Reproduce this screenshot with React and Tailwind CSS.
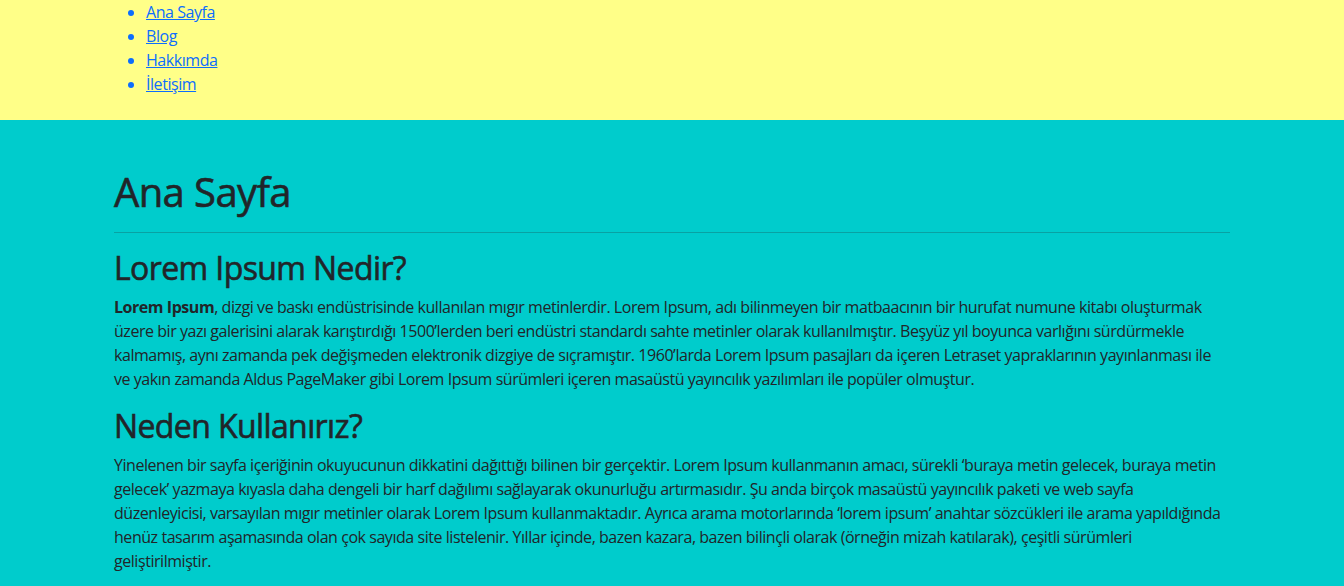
export default function App() {
  const links = ["Ana Sayfa", "Blog", "Hakkımda", "İletişim"];
  const heading = "font-medium tracking-[-0.6px] [-webkit-text-stroke:0.6px_#212529]";

  return (
    <div className="min-h-screen bg-[#00cccc] text-[#212529] text-[16px] leading-6 tracking-[-0.45px]" style={{ fontFamily: '"Open Sans", sans-serif' }}>
      <header className="bg-[#ffff88] h-[120px]">
        <div className="max-w-[1140px] mx-auto px-3">
          <ul className="list-disc pl-8">
            {links.map((l) => (
              <li key={l} className="text-[#0d6efd]">
                <a href="#" className="underline">{l}</a>
              </li>
            ))}
          </ul>
        </div>
      </header>

      <main className="max-w-[1140px] mx-auto px-3 pt-12 pb-4">
        <h1 className={`text-[40px] leading-[48px] mb-2 ${heading}`}>Ana Sayfa</h1>
        <hr className="my-4 border-t border-[#212529] opacity-25" />

        <h2 className={`text-[32px] leading-[38px] mb-2 mt-0.5 ${heading}`}>Lorem Ipsum Nedir?</h2>
        <p className="mb-4">
          <b>Lorem Ipsum</b>, dizgi ve baskı endüstrisinde kullanılan mıgır metinlerdir. Lorem Ipsum, adı bilinmeyen bir matbaacının bir hurufat numune kitabı oluşturmak<br />
          üzere bir yazı galerisini alarak karıştırdığı 1500’lerden beri endüstri standardı sahte metinler olarak kullanılmıştır. Beşyüz yıl boyunca varlığını sürdürmekle<br />
          kalmamış, aynı zamanda pek değişmeden elektronik dizgiye de sıçramıştır. 1960’larda Lorem Ipsum pasajları da içeren Letraset yapraklarının yayınlanması ile<br />
          ve yakın zamanda Aldus PageMaker gibi Lorem Ipsum sürümleri içeren masaüstü yayıncılık yazılımları ile popüler olmuştur.
        </p>

        <h2 className={`text-[32px] leading-[38px] mb-2 ${heading}`}>Neden Kullanırız?</h2>
        <p className="mb-4">
          Yinelenen bir sayfa içeriğinin okuyucunun dikkatini dağıttığı bilinen bir gerçektir. Lorem Ipsum kullanmanın amacı, sürekli ‘buraya metin gelecek, buraya metin<br />
          gelecek’ yazmaya kıyasla daha dengeli bir harf dağılımı sağlayarak okunurluğu artırmasıdır. Şu anda birçok masaüstü yayıncılık paketi ve web sayfa<br />
          düzenleyicisi, varsayılan mıgır metinler olarak Lorem Ipsum kullanmaktadır. Ayrıca arama motorlarında ‘lorem ipsum’ anahtar sözcükleri ile arama yapıldığında<br />
          henüz tasarım aşamasında olan çok sayıda site listelenir. Yıllar içinde, bazen kazara, bazen bilinçli olarak (örneğin mizah katılarak), çeşitli sürümleri<br />
          geliştirilmiştir.
        </p>
      </main>
    </div>
  );
}
